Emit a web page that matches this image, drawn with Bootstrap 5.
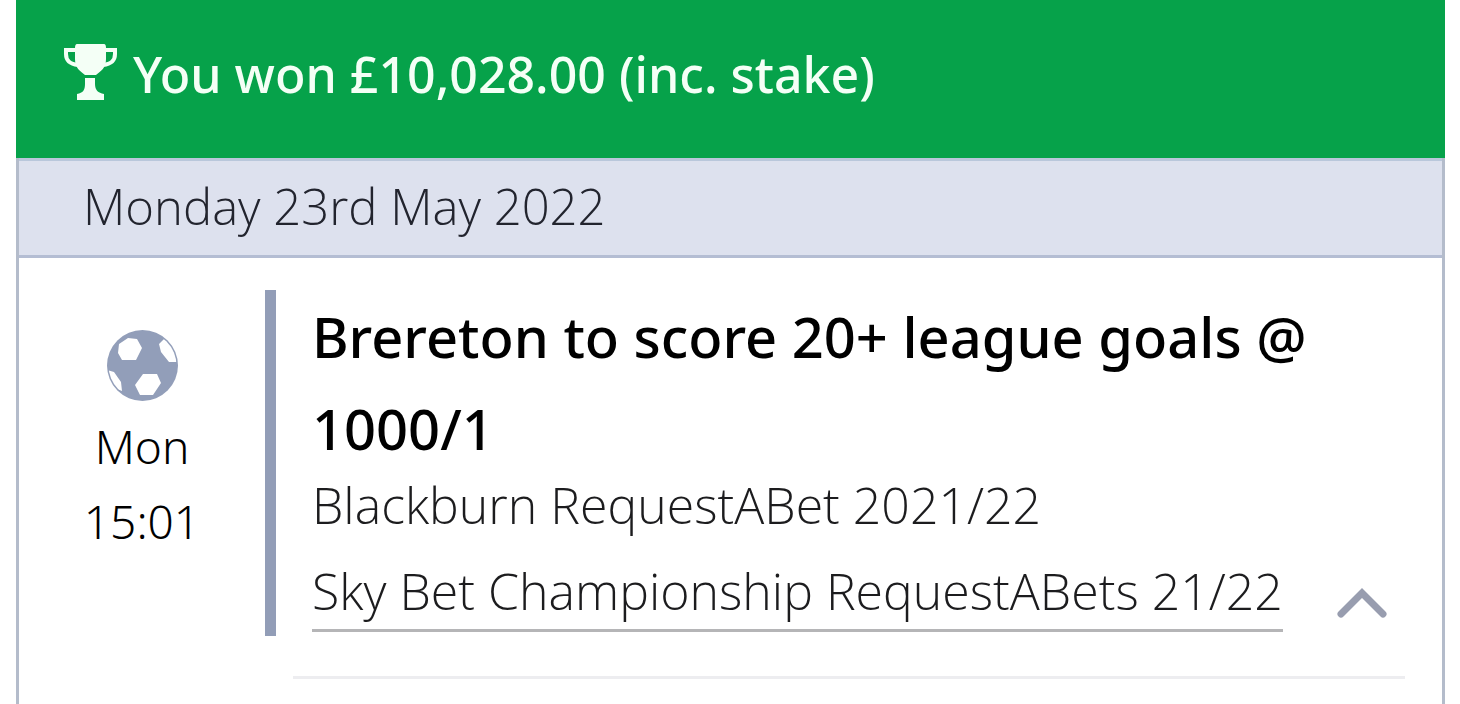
<!DOCTYPE html>
<html lang="en">
<head>
<meta charset="utf-8">
<meta name="viewport" content="width=device-width, initial-scale=1">
<title>My bets</title>
<link href="https://cdn.jsdelivr.net/npm/bootstrap@5.3.0/dist/css/bootstrap.min.css" rel="stylesheet">
<script src="https://cdn.jsdelivr.net/npm/bootstrap@5.3.0/dist/js/bootstrap.bundle.min.js" defer></script>
<style>
body{font-family:"Noto Sans","Open Sans",sans-serif;background:#fff;color:#000}
.slip{margin:0 15px 0 16px}
.win-banner{background:#06a24a;color:#f4fff6;padding:44px 48px 54px;font-size:50px;line-height:60px;font-weight:500;gap:16px}
.win-banner svg{margin-bottom:4px}
.slip-body{border:solid #b4bccb;border-width:0 3px}
.slip-date{background:#dde1ee;border-top:3px solid #b9c7db;border-bottom:3px solid #b4bdd3;padding:0 64px 4px;font:300 49px/90px "Open Sans",sans-serif;color:#22242e}
.bet{padding-top:32px}
.bet-when{width:246px;padding-top:40px;font-size:46px;line-height:75px;font-weight:300}
.bet-when svg{margin-bottom:8px}
.bet-info{border-left:11px solid #929db7;padding:0 55px 4px 36px}
.bet-title{font-size:56px;line-height:92px;font-weight:500}
.bet-line{font:300 50px/62px "Open Sans",sans-serif;color:#1c1c1e}
.bet-event{border-bottom:3px solid #b5b5b7;padding-bottom:7px;color:inherit}
.bet-rule{height:3px;margin:40px 37px 0 274px;background:#ededf0}
.toggle-btn{margin-bottom:14px}
</style>
</head>
<body>
<main class="slip min-vh-100 d-flex flex-column">
  <header class="win-banner d-flex align-items-center">
    <svg class="flex-shrink-0" width="53" height="56" viewBox="0 0 53 56" aria-hidden="true">
      <path d="M13 0H40Q42 0 42 4V15C42 24 37 27 32 31H21C16 27 11 24 11 15V4Q11 0 13 0zM21 34H31V40C31 46 34 49 40 50V56H13V50C19 49 21 46 21 40z" fill="#f4fff6"/>
      <path d="M12 6H2V10C2 17 6 20 14 21M41 6H51V10C51 17 47 20 39 21" fill="none" stroke="#f4fff6" stroke-width="4"/>
    </svg>
    <span>You won £10,028.00 (inc. stake)</span>
  </header>
  <section class="slip-body flex-grow-1">
    <h2 class="slip-date m-0">Monday 23rd May 2022</h2>
    <article class="bet d-flex">
      <div class="bet-when flex-shrink-0 d-flex flex-column align-items-center">
        <svg width="71" height="71" viewBox="0 0 71 71" aria-hidden="true">
          <defs><clipPath id="ball"><circle cx="35.5" cy="35.5" r="34"/></clipPath></defs>
          <circle cx="35.5" cy="35.5" r="35.5" fill="#929eb9"/>
          <g clip-path="url(#ball)" fill="#fff">
            <path d="M12 14 21 8 30 9 35 18 29 30H15L11 23zM36 44H50L54 53 46 65H33L28 55zM52 14 58 8 68 15 72 32H62L54 22zM0 40 7 42 14 52 15 61 5 57z"/>
          </g>
        </svg>
        <span>Mon</span>
        <time datetime="15:01">15:01</time>
      </div>
      <div class="bet-info flex-grow-1 d-flex align-items-end justify-content-between">
        <div>
          <h1 class="bet-title m-0">Brereton to score 20+ league goals @ 1000/1</h1>
          <p class="bet-line mb-4">Blackburn RequestABet 2021/22</p>
          <div class="bet-line"><a href="#" class="bet-event d-inline-block text-decoration-none">Sky Bet Championship RequestABets 21/22</a></div>
        </div>
        <button type="button" class="toggle-btn btn p-0 border-0 d-flex flex-shrink-0" aria-label="Collapse bet">
          <svg width="50" height="30" viewBox="0 0 50 30" aria-hidden="true"><path d="M4 26 25 5 46 26" fill="none" stroke="#989daf" stroke-width="7" stroke-linecap="round"/></svg>
        </button>
      </div>
    </article>
    <div class="bet-rule"></div>
  </section>
</main>
</body>
</html>
